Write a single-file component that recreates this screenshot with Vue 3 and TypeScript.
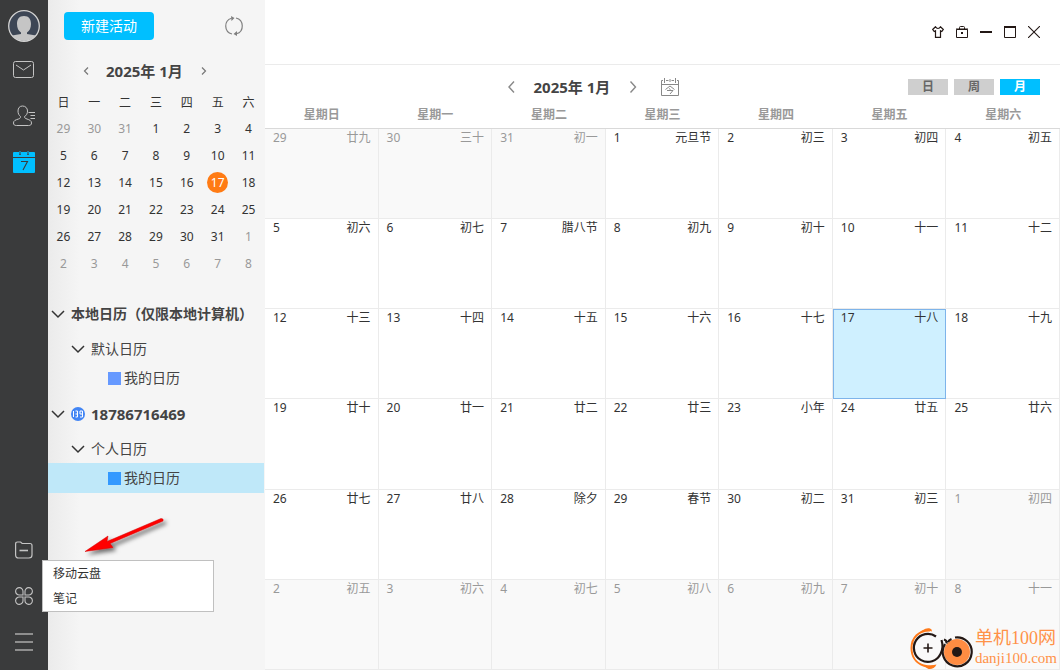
<script setup lang="ts">
import { ref } from 'vue'

interface Day {
  day: number
  lunar: string
  outside: boolean
}

const weekdays: string[] = ['日', '一', '二', '三', '四', '五', '六']

const lunar: string[] = [
  '廿九', '三十', '初一', '元旦节', '初三', '初四', '初五',
  '初六', '初七', '腊八节', '初九', '初十', '十一', '十二',
  '十三', '十四', '十五', '十六', '十七', '十八', '十九',
  '廿十', '廿一', '廿二', '廿三', '小年', '廿五', '廿六',
  '廿七', '廿八', '除夕', '春节', '初二', '初三', '初四',
  '初五', '初六', '初七', '初八', '初九', '初十', '十一',
]

const weeks: Day[][] = Array.from({ length: 6 }, (_, w) =>
  Array.from({ length: 7 }, (_, d) => {
    const index = w * 7 + d
    const date = new Date(2024, 11, 29 + index)
    return { day: date.getDate(), lunar: lunar[index], outside: date.getMonth() !== 0 }
  }),
)

const selected = ref<number>(17)
const view = ref<string>('月')
const views: string[] = ['日', '周', '月']
const isSelected = (d: Day): boolean => !d.outside && d.day === selected.value
</script>

<template>
  <div class="app">
    <nav class="rail" aria-label="主导航">
      <button class="avatar" aria-label="头像">
        <svg width="32" height="32" viewBox="0 0 32 32">
          <clipPath id="face"><circle cx="16" cy="16" r="15" /></clipPath>
          <circle cx="16" cy="16" r="15" fill="#3d4655" />
          <g clip-path="url(#face)" fill="#c5c5c5">
            <path d="M16 6c5 0 7 3.500 7 8 0 4-1.500 7-4 8.500v1.500l12 2v8H1v-8l12-2v-1.500C10.500 21 9 18 9 14c0-4.500 2-8 7-8z" />
          </g>
          <circle cx="16" cy="16" r="15.300" fill="none" stroke="#d4d4d4" stroke-width="1.300" />
        </svg>
      </button>
      <button class="rail-item" aria-label="邮件">
        <svg width="22" height="18" viewBox="0 0 22 18" fill="none" stroke="#c4c4c4">
          <rect x=".5" y=".5" width="20" height="16" rx="2" />
          <path d="M3 4l7.500 5L18 4" />
        </svg>
      </button>
      <button class="rail-item" aria-label="联系人">
        <svg width="22" height="22" viewBox="0 0 22 22" fill="none" stroke="#c4c4c4">
          <path d="M9.500 1C6.500 1 5 3.200 5 6c0 2.500 1 4.500 2.500 5.500 0 1.500-.5 2-2 2.500C2.500 15 .5 15.500.5 18c0 1.800 1 2.500 3 2.500h12c2 0 3-.7 3-2.500 0-2.500-2-3-4.500-4-2-.7-2.500-1-2.500-2.500C13.500 10.500 14.500 8.500 14.500 6c0-2.800-2-5-5-5z" />
          <path d="M15.500 7.500H22M17.500 10.500H22M17.500 13.500H22" />
        </svg>
      </button>
      <button class="rail-item" aria-label="日历">
        <svg width="22" height="22" viewBox="0 0 22 22">
          <path fill="#00bfff" d="M1 1h5v3h2V1h6v3h2V1h5q1 0 1 1v4H0V2q0-1 1-1zM0 7h22v14q0 1-1 1H1q-1 0-1-1z" />
          <path d="M7 0v3.500M15 0v3.500" stroke="#00bfff" stroke-width="1" />
          <path d="M8 10.500h6.500L10 19" fill="none" stroke="#3a3b3c" stroke-width="1.100" />
        </svg>
      </button>
      <div class="grow"></div>
      <button class="rail-item" aria-label="文件夹">
        <svg width="18" height="18" viewBox="0 0 18 18" fill="none" stroke="#c4c4c4" stroke-width="1.200">
          <path d="M.6 14V3q0-2 2-2h3l1.500 1.500H15q2 0 2 2V14q0 3-3 3H3.600q-3 0-3-3z" />
          <path d="M4.500 9.500h8.500" stroke-width="1.600" />
        </svg>
      </button>
      <button class="rail-item" aria-label="更多应用">
        <svg width="18" height="18" viewBox="0 0 18 18" fill="none" stroke="#c4c4c4" stroke-width="1.100">
          <path d="M8 8H4.500A3.700 3.700 0 1 1 8 4.500zM10 8h3.500A3.700 3.700 0 1 0 10 4.500zM8 10H4.500A3.700 3.700 0 1 0 8 13.500zM10 10h3.500A3.700 3.700 0 1 1 10 13.500z" />
        </svg>
      </button>
      <button class="rail-item" aria-label="菜单">
        <svg width="18" height="18" viewBox="0 0 18 18" stroke="#8e8e8e" stroke-width="2">
          <path d="M0 1h18M0 9h18M0 17h18" />
        </svg>
      </button>
    </nav>

    <aside class="side">
      <div class="side-top">
        <button class="create">新建活动</button>
        <button class="icon" aria-label="同步">
          <svg width="20" height="20" viewBox="0 0 20 20" fill="none" stroke="#808080" stroke-width="1.200">
            <path d="M8 18A8.200 8.200 0 0 1 7.500 2.200M12 2a8.200 8.200 0 0 1 .5 15.800" />
            <path d="M7 0l3.500 2L7.500 5zM13 15l-3.500 3 3.500 2z" fill="#808080" stroke="none" />
          </svg>
        </button>
      </div>

      <div class="mini-nav">
        <button class="icon" aria-label="上个月">
          <svg width="12" height="12" viewBox="0 0 12 12"><path d="M8 2.500L4.500 6 8 9.500" fill="none" stroke="#777" stroke-width="1.200" /></svg>
        </button>
        <h2 class="month">2025年 1月</h2>
        <button class="icon" aria-label="下个月">
          <svg width="12" height="12" viewBox="0 0 12 12"><path d="M5 2.500L8.500 6 5 9.500" fill="none" stroke="#777" stroke-width="1.200" /></svg>
        </button>
      </div>

      <table class="mini">
        <thead>
          <tr><th v-for="w in weekdays" :key="w" scope="col">{{ w }}</th></tr>
        </thead>
        <tbody>
          <tr v-for="(week, i) in weeks" :key="i">
            <td v-for="d in week" :key="d.lunar" :class="{ outside: d.outside }">
              <span :class="{ today: isSelected(d) }">{{ d.day }}</span>
            </td>
          </tr>
        </tbody>
      </table>

      <ul class="tree">
        <li class="row group">
          <svg class="chevron" viewBox="0 0 14 14"><path d="M1 4l6 6 6-6" /></svg>
          <span>本地日历（仅限本地计算机）</span>
        </li>
        <li class="row folder">
          <svg class="chevron" viewBox="0 0 14 14"><path d="M1 4l6 6 6-6" /></svg>
          <span>默认日历</span>
        </li>
        <li class="row leaf"><i class="swatch violet"></i><span>我的日历</span></li>
        <li class="row group">
          <svg class="chevron" viewBox="0 0 14 14"><path d="M1 4l6 6 6-6" /></svg>
          <svg class="badge" viewBox="0 0 14 14">
            <circle cx="7" cy="7" r="7" fill="#4285f4" />
            <path d="M2.500 4v6M4.500 4h2v6h-2M4.500 7h2M11.500 7H9V4h2.500v6H9" fill="none" stroke="#fff" stroke-width="1" />
          </svg>
          <span class="account">18786716469</span>
        </li>
        <li class="row folder">
          <svg class="chevron" viewBox="0 0 14 14"><path d="M1 4l6 6 6-6" /></svg>
          <span>个人日历</span>
        </li>
        <li class="row leaf active"><i class="swatch"></i><span>我的日历</span></li>
      </ul>
    </aside>

    <main class="main">
      <header class="titlebar">
        <button class="icon" aria-label="皮肤">
          <svg width="12" height="12" viewBox="0 0 12 12" fill="none" stroke="#231815" stroke-width="1.200">
            <path d="M3.500 .8L.7 3.500l1.500 2 1.300-.7v6.600h5V4.800l1.300.7 1.500-2L8.500.8Q7.500 2.500 6 2.500T3.500.8z" />
          </svg>
        </button>
        <button class="icon" aria-label="锁定">
          <svg width="12" height="12" viewBox="0 0 12 12" fill="none" stroke="#231815">
            <path d="M.5 3.500h11v8H.5zM0 3h12" /><path d="M3.500 3V1.500q0-1 1-1h3q1 0 1 1V3" />
            <path d="M5 6h2v2H5z" fill="#231815" stroke="none" />
          </svg>
        </button>
        <button class="icon" aria-label="最小化">
          <svg width="12" height="12" viewBox="0 0 12 12"><path d="M0 6h12" stroke="#231815" stroke-width="2" /></svg>
        </button>
        <button class="icon" aria-label="最大化">
          <svg width="12" height="12" viewBox="0 0 12 12"><path d="M.5 1v10.500h11V1M0 1h12" fill="none" stroke="#231815" /><path d="M0 0h12v2H0z" fill="#231815" /></svg>
        </button>
        <button class="icon" aria-label="关闭">
          <svg width="12" height="12" viewBox="0 0 12 12"><path d="M0 0l12 12M12 0L0 12" stroke="#231815" stroke-width="1.100" /></svg>
        </button>
      </header>

      <div class="toolbar">
        <button class="icon" aria-label="上个月">
          <svg width="14" height="14" viewBox="0 0 14 14"><path d="M10 1.500L5 7l5 5.500" fill="none" stroke="#888" stroke-width="1.400" /></svg>
        </button>
        <h1 class="month">2025年 1月</h1>
        <button class="icon" aria-label="下个月">
          <svg width="14" height="14" viewBox="0 0 14 14"><path d="M4.500 1.500l5 5.500-5 5.500" fill="none" stroke="#888" stroke-width="1.400" /></svg>
        </button>
        <button class="icon goto" aria-label="今天">
          <svg width="18" height="18" viewBox="0 0 18 18" fill="none" stroke="#888">
            <path d="M2 2.500H.5v15h17v-15H16M5 2.500h2.500M10.500 2.500H13M.5 6.500h17M3.500 0v5M9 1v3M14.500 0v5" />
            <path d="M4.500 11.500L9 8l4.500 3.500M8 10.500l1.500 1M6 12.500h6l-3 3.500" />
          </svg>
        </button>
        <div class="views">
          <button v-for="v in views" :key="v" :class="{ on: v === view }" @click="view = v">{{ v }}</button>
        </div>
      </div>

      <table class="grid">
        <thead>
          <tr><th v-for="w in weekdays" :key="w" scope="col">星期{{ w }}</th></tr>
        </thead>
        <tbody>
          <tr v-for="(week, i) in weeks" :key="i">
            <td
              v-for="d in week"
              :key="d.lunar"
              :class="{ outside: d.outside, selected: isSelected(d) }"
              @click="selected = d.outside ? selected : d.day"
            >
              <div class="cell"><span>{{ d.day }}</span><span>{{ d.lunar }}</span></div>
            </td>
          </tr>
        </tbody>
      </table>
    </main>

    <svg class="pointer" width="92" height="48" viewBox="0 0 92 48">
      <defs>
        <filter id="shade" x="-20%" y="-20%" width="150%" height="160%">
          <feDropShadow dx="3" dy="3" stdDeviation="2" flood-color="#000" flood-opacity=".55" />
        </filter>
      </defs>
      <path filter="url(#shade)" fill="#f00" stroke="#d00000" stroke-width=".5" d="M3 36.500L26 21 25 26.500 79 3.500Q82 3.500 81 6L28 28.500 31 32.500z" />
    </svg>

    <div class="popup" role="menu">
      <button role="menuitem">移动云盘</button>
      <button role="menuitem">笔记</button>
    </div>

    <div class="brand">
      <svg width="66" height="46" viewBox="0 0 66 46" fill="none">
        <path d="M23 6.500C12 6 4.500 14 4.500 24c0 8 4 15 12 17.500q5 1.500 10 1" stroke="#ff7a1a" stroke-width="2" />
        <path d="M11 10c3-3 8-7 12-5.500q2 .5 2 3c-5-1-9 0-14 2.500zM14 40.500c4 1.500 8 1.500 15.500 0-2 4-5 5-8 4.500z" fill="#ff7a1a" />
        <path d="M29 12.500A14 14 0 1 0 33.500 30Q37 24 34.500 16" stroke="#231815" stroke-width="2.200" />
        <path d="M21 19.500v9M16.500 24h9" stroke="#231815" stroke-width="1.600" />
        <circle cx="50" cy="28" r="13" fill="#ff8c42" />
        <path d="M48 13.500A14.500 14.500 0 1 1 38 20M37 15.500q3 1 2.500 4M41 18q1-2 3.500-3" stroke="#231815" stroke-width="2.200" />
        <circle cx="50" cy="28" r="5" fill="#231815" />
      </svg>
      <div><p class="brand-name">单机100网</p><p class="brand-site">danji100.com</p></div>
    </div>
  </div>
</template>

<style>
body {
  margin: 0;
}
</style>

<style scoped>
.app {
  position: relative;
  display: flex;
  min-height: 100vh;
  background: #fff;
  color: #333;
  font: 12px/18px "Noto Sans", "Noto Sans CJK SC", sans-serif;
}
.app * {
  box-sizing: border-box;
}
button {
  display: flex;
  align-items: center;
  justify-content: center;
  padding: 0;
  border: 0;
  background: none;
  color: inherit;
  font: inherit;
  cursor: pointer;
}
svg {
  display: block;
}
.rail {
  display: flex;
  flex-direction: column;
  align-items: center;
  width: 48px;
  padding: 10px 0 5px;
  background: #3a3b3c;
}
.avatar {
  height: 32px;
  margin-bottom: 5px;
}
.rail-item {
  width: 48px;
  height: 46px;
}
.grow {
  flex: 1;
}
.side {
  width: 217px;
  padding-right: 1px;
  background: linear-gradient(90deg, #ebebeb, #f5f5f5 32px);
}
.side-top {
  display: flex;
  align-items: center;
  justify-content: space-between;
  height: 52px;
  padding: 0 20px 0 16px;
}
.create {
  width: 90px;
  height: 28px;
  border-radius: 4px;
  background: #00bfff;
  color: #fff;
  font-size: 14px;
}
.mini-nav {
  display: flex;
  align-items: center;
  gap: 14px;
  height: 38px;
  padding-left: 32px;
}
.month {
  margin: 0;
  color: #444;
  font-size: 15px;
  font-weight: 700;
  line-height: 20px;
  white-space: nowrap;
}
table {
  width: 100%;
  table-layout: fixed;
  border-spacing: 0;
}
th,
td {
  padding: 0;
}
.mini {
  text-align: center;
}
.mini th {
  height: 25px;
  font-weight: 400;
}
.mini td {
  height: 27px;
}
.mini span {
  display: inline-block;
  width: 21px;
  line-height: 21px;
  border-radius: 50%;
}
.mini .today {
  background: #ff7b14;
  color: #fff;
}
.outside {
  color: #999;
}
.tree {
  margin: 16px 0 0;
  padding: 0;
  list-style: none;
  color: #444;
  font-size: 14px;
  line-height: 20px;
  white-space: nowrap;
}
.row {
  display: flex;
  align-items: center;
  height: 30px;
}
.group {
  gap: 6px;
  height: 40px;
  padding: 2px 0 0 3px;
  font-weight: 700;
}
.folder {
  gap: 6px;
  padding: 2px 0 0 23px;
}
.leaf {
  gap: 3px;
  padding-left: 60px;
}
.active {
  background: #bfe8f9;
}
.account {
  font-size: 15px;
}
.chevron,
.badge {
  flex: none;
  width: 14px;
  height: 14px;
}
.chevron {
  fill: none;
  stroke: #333;
  stroke-width: 1.5;
}
.swatch {
  width: 13px;
  height: 13px;
  background: #3399ff;
}
.violet {
  background: #6699ff;
}
.main {
  display: flex;
  flex: 1;
  flex-direction: column;
  min-width: 0;
}
.titlebar {
  display: flex;
  align-items: center;
  justify-content: flex-end;
  gap: 12px;
  height: 65px;
  padding-right: 20px;
  border-bottom: 1px solid #ebebeb;
}
.toolbar {
  display: flex;
  align-items: center;
  gap: 16px;
  height: 36px;
  padding: 8px 20px 0 30%;
}
.goto {
  margin-left: 5px;
}
.views {
  display: flex;
  gap: 6px;
  margin-left: auto;
}
.views button {
  width: 40px;
  height: 16px;
  background: #cfcfcf;
  color: #666;
  font-weight: 700;
}
.views .on {
  background: #00bfff;
  color: #fff;
}
.grid {
  flex: 1;
  height: calc(100vh - 101px);
}
.grid th {
  height: 28px;
  border-bottom: 1px solid #d9d9d9;
  color: #999;
  font-weight: 700;
}
.grid td {
  border-right: 1px solid #ebebeb;
  border-bottom: 1px solid #ebebeb;
  vertical-align: top;
}
.grid .outside {
  background: #f9f9f9;
}
.grid .selected {
  border-color: #7eb4ea;
  background: #cff0ff;
  box-shadow: inset 1px 1px #7eb4ea;
}
.cell {
  display: flex;
  justify-content: space-between;
  padding: 0 7px 0 8px;
}
.pointer {
  position: absolute;
  bottom: 107px;
  left: 82px;
}
.popup {
  position: absolute;
  bottom: 58px;
  left: 42px;
  width: 172px;
  border: 1px solid #c0c0c0;
  background: #fff;
}
.popup button {
  justify-content: flex-start;
  width: 100%;
  height: 25px;
  padding-left: 10px;
}
.brand {
  position: absolute;
  right: 3px;
  bottom: 0;
  display: flex;
  align-items: center;
  gap: 2px;
  color: #ff9248;
  font-family: "Liberation Serif", "Noto Sans CJK SC", serif;
  white-space: nowrap;
}
.brand p {
  margin: 0;
}
.brand-name {
  font-size: 18px;
  line-height: 22px;
}
.brand-site {
  font-size: 15px;
  line-height: 18px;
}
</style>
